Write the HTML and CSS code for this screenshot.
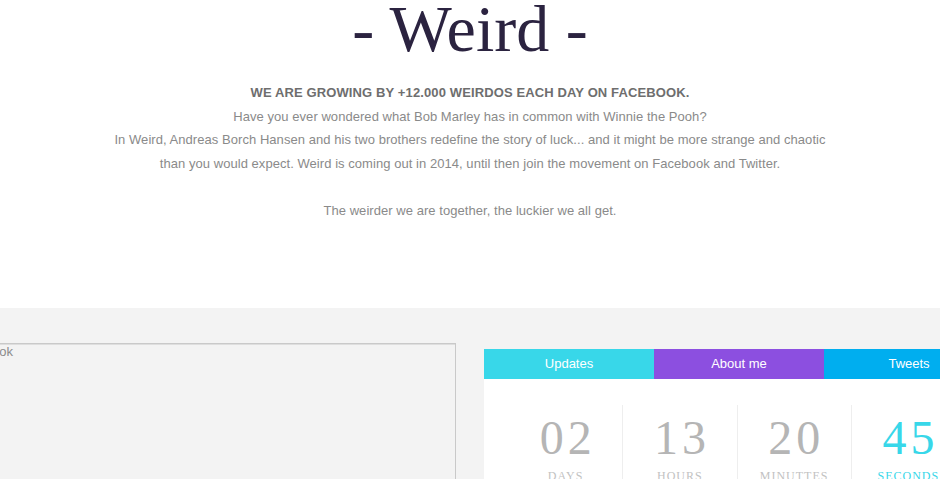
FILE: index.html
```html
<!DOCTYPE html>
<html lang="en">
<head>
<meta charset="utf-8">
<title>Weird</title>
<link rel="stylesheet" href="styles.css">
</head>
<body>
<header class="intro">
  <h1 class="title">- Weird -</h1>
  <p class="lead"><strong>WE ARE GROWING BY +12.000 WEIRDOS EACH DAY ON FACEBOOK.</strong><br>Have you ever wondered what Bob Marley has in common with Winnie the Pooh?<br>In Weird, Andreas Borch Hansen and his two brothers redefine the story of luck... and it might be more strange and chaotic<br>than you would expect. Weird is coming out in 2014, until then join the movement on Facebook and Twitter.<br><br>The weirder we are together, the luckier we all get.</p>
</header>
<section class="band">
  <div class="band-inner">
    <div class="fb-frame"><span class="fb-text">Facebook</span></div>
    <div class="panel">
      <nav class="tabs">
        <a class="tab tab-updates">Updates</a>
        <a class="tab tab-about">About me</a>
        <a class="tab tab-tweets">Tweets</a>
      </nav>
      <div class="countdown">
        <div class="unit"><span class="num">02</span><span class="label">Days</span></div>
        <div class="unit"><span class="num">13</span><span class="label">Hours</span></div>
        <div class="unit"><span class="num">20</span><span class="label">Minuttes</span></div>
        <div class="unit unit-accent"><span class="num">45</span><span class="label">Seconds</span></div>
      </div>
    </div>
  </div>
</section>
</body>
</html>
```
FILE: styles.css
```css
html, body {
  margin: 0;
  padding: 0;
  background: #fff;
  overflow: hidden;
}
body {
  font-family: "Liberation Sans", Arial, sans-serif;
  width: 940px;
  height: 480px;
}
.intro {
  text-align: center;
}
.title {
  margin: -9px 0 0;
  font-family: "Liberation Serif", "Times New Roman", serif;
  font-weight: normal;
  font-size: 66px;
  line-height: normal;
  color: #2b2340;
}
.lead {
  margin: 14px 0 0;
  font-size: 13px;
  line-height: 23.5px;
  letter-spacing: 0.05px;
  color: #8a8a8a;
  white-space: nowrap;
}
.lead strong {
  color: #6e6e6e;
  letter-spacing: 0.12px;
}
.band {
  margin-top: 86px;
  background: #f3f3f3;
  height: 171px;
  display: flex;
  justify-content: center;
  overflow: hidden;
}
.band-inner {
  flex: none;
  width: 1048px;
  display: flex;
  gap: 28px;
  padding-top: 35px;
  align-items: flex-start;
}
.fb-frame {
  width: 510px;
  height: 200px;
  box-sizing: border-box;
  border: 1px solid #c9c9c9;
  box-shadow: inset 1px 1px 0 #dedede;
  padding: 0 9px;
  font-size: 13px;
  line-height: 15px;
  color: #8c8c8c;
}
.panel {
  width: 510px;
  margin-top: 6px;
  background: #fff;
  height: 200px;
}
.tabs {
  display: flex;
  height: 30px;
}
.tab {
  flex: 1;
  color: #fff;
  font-size: 13px;
  line-height: 30px;
  text-align: center;
}
.tab-updates { background: #38d7e9; }
.tab-about { background: #8c4fe0; }
.tab-tweets { background: #00aeef; }
.countdown {
  display: flex;
  padding: 26px 29px 0 25px;
}
.unit {
  flex: 1;
  display: flex;
  flex-direction: column;
  align-items: center;
  padding-top: 10px;
  height: 100px;
  border-left: 1px solid #eeeeee;
  font-family: "Liberation Serif", "Times New Roman", serif;
  color: #b5b5b5;
}
.unit:first-child {
  border-left: none;
}
.num {
  font-size: 48px;
  line-height: 46px;
  letter-spacing: 4px;
  margin-right: -4px;
}
.label {
  margin-top: 8px;
  font-size: 12px;
  line-height: 14px;
  letter-spacing: 1px;
  text-transform: uppercase;
  color: #c2c2c2;
}
.unit-accent .num,
.unit-accent .label {
  color: #38d7e9;
}
```
